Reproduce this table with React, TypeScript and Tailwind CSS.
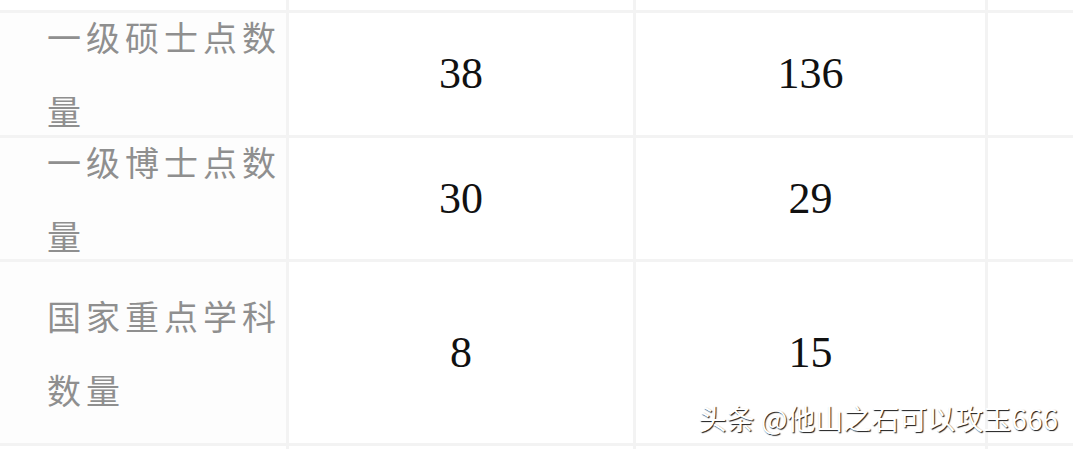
const rows = [
  { label: "一级硕士点数量", a: "38", b: "136", h: "h-[122px]" },
  { label: "一级博士点数量", a: "30", b: "29", h: "h-[121px]" },
  { label: "国家重点学科数量", a: "8", b: "15", h: "h-[181px]" },
];

const cjk = "font-['Noto_Sans_CJK_SC',sans-serif]";
const num = "font-['Liberation_Serif',serif]";

export default function App() {
  return (
    <div className="relative h-[449px] w-[1073px] overflow-hidden bg-white">
      <div className="grid grid-cols-[286px_344px_349px_1fr] gap-[3px] bg-[#f3f3f3]">
        {/* partial row at the top */}
        <div className="h-[10px] bg-white" />
        <div className="h-[10px] bg-white" />
        <div className="h-[10px] bg-white" />
        <div className="h-[10px] bg-white" />

        {rows.map((r) => (
          <div key={r.label} className="contents">
            <div className={`${r.h} flex items-center bg-[#fdfdfd] pl-[47px] pr-[4px]`}>
              <p className={`${cjk} text-[34px] leading-[74px] tracking-[5px] text-[#8f8f8f]`}>
                {r.label}
              </p>
            </div>
            <div className={`${r.h} flex items-center justify-center bg-white`}>
              <span className={`${num} text-[44px] text-[#111]`}>{r.a}</span>
            </div>
            <div className={`${r.h} flex items-center justify-center bg-white`}>
              <span className={`${num} text-[44px] text-[#111]`}>{r.b}</span>
            </div>
            <div className={`${r.h} bg-white`} />
          </div>
        ))}

        <div className="h-[10px] bg-white" />
        <div className="h-[10px] bg-white" />
        <div className="h-[10px] bg-white" />
        <div className="h-[10px] bg-white" />
      </div>

      <div
        className={`${cjk} absolute right-[15px] top-[400px] text-[28px] leading-[36px] text-white [text-shadow:1px_1px_1px_rgba(0,0,0,0.9)]`}
      >
        头条 @他山之石可以攻玉666
      </div>
    </div>
  );
}
